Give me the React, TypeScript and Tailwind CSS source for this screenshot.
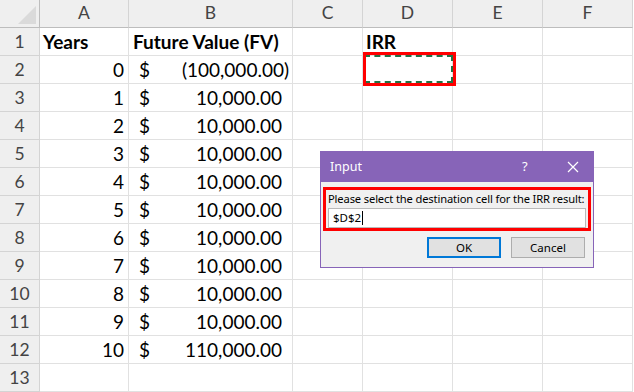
import React from "react";

const cols = ["A", "B", "C", "D", "E", "F"];
const colW = ["w-[89px]", "w-[164px]", "w-[70px]", "w-[90px]", "w-[90px]", "w-[90px]"];

const rows: { year: string; fv: string; neg?: boolean }[] = [
  { year: "0", fv: "(100,000.00)", neg: true },
  { year: "1", fv: "10,000.00" },
  { year: "2", fv: "10,000.00" },
  { year: "3", fv: "10,000.00" },
  { year: "4", fv: "10,000.00" },
  { year: "5", fv: "10,000.00" },
  { year: "6", fv: "10,000.00" },
  { year: "7", fv: "10,000.00" },
  { year: "8", fv: "10,000.00" },
  { year: "9", fv: "10,000.00" },
  { year: "10", fv: "110,000.00" },
];

const cell = "h-[28px] shrink-0 border-r border-b border-[#e1e1e1] flex items-end pb-[2px]";

function Row({ n, children }: { n: number; children: React.ReactNode[] }) {
  return (
    <div className="flex leading-[22px]">
      <div className="w-[40px] h-[28px] shrink-0 bg-[#efefef] border-r border-b border-[#d4d4d4] flex items-end justify-center pb-[2px] text-[#444] text-[17.5px]">
        {n}
      </div>
      {cols.map((c, i) => (
        <div key={c} className={`${cell} ${colW[i]}`}>
          {children[i]}
        </div>
      ))}
    </div>
  );
}

export default function App() {
  return (
    <div className="relative w-[634px] h-[392px] overflow-hidden bg-white text-[19px] text-black [font-family:Lato,'Liberation_Sans',sans-serif]">
      {/* column headers */}
      <div className="flex h-[28px] leading-[22px]">
        <div className="w-[40px] shrink-0 bg-[#efefef] border-r border-b border-[#bdbdbd] relative">
          <div className="absolute right-[3px] bottom-[3px] w-0 h-0 border-l-[18px] border-l-transparent border-b-[18px] border-b-[#dadada]" />
        </div>
        {cols.map((c, i) => (
          <div
            key={c}
            className={`${colW[i]} shrink-0 bg-[#efefef] border-r border-[#d4d4d4] border-b border-b-[#bdbdbd] flex items-end justify-center pb-[3px] text-[#444] text-[17.5px]`}
          >
            {c}
          </div>
        ))}
      </div>

      <Row n={1}>
        {[
          <span className="font-bold pl-[3px]">Years</span>,
          <span className="font-bold pl-[4px]">Future Value (FV)</span>,
          null,
          <span className="font-bold pl-[3px]">IRR</span>,
          null,
          null,
        ]}
      </Row>
      {rows.map((r, i) => (
        <Row key={i} n={i + 2}>
          {[
            <span className="w-full text-right pr-[4px]">{r.year}</span>,
            <div className="w-full flex justify-between pl-[10px]">
              <span>$</span>
              <span className={r.neg ? "pr-[3px]" : "pr-[10px]"}>{r.fv}</span>
            </div>,
            null,
            null,
            null,
            null,
          ]}
        </Row>
      ))}
      <Row n={13}>{[null, null, null, null, null, null]}</Row>

      {/* marching ants + highlight on D2 */}
      <div className="absolute left-[364px] top-[55px] w-[89px] h-[28px] border-2 border-dashed border-[#217346]" />
      <div className="absolute left-[363px] top-[52px] w-[93px] h-[34px] border-[3px] border-[#ff0000]" />

      {/* Input dialog */}
      <div className="absolute left-[320px] top-[151px] w-[274px] h-[117px] border border-[#8764b8] bg-[#f0f0f0] [font-family:'Noto_Sans','Open_Sans',sans-serif]">
        <div className="h-[30px] bg-[#8764b8] flex items-center text-white text-[12.5px] pl-[9px]">
          <span className="flex-1">Input</span>
          <span className="w-[10px] text-[13px] mr-[35px]">?</span>
          <svg width="12" height="12" viewBox="0 0 12 12" className="mr-[14px]">
            <path d="M1 1L11 11M11 1L1 11" stroke="white" strokeWidth="1.2" />
          </svg>
        </div>
        <div className="mx-[2px] mt-[5px] h-[44px] border-[3px] border-[#ff0000] px-[2px] pt-[2px]">
          <div className="text-[11.2px] leading-[14px] tracking-[-0.15px] whitespace-nowrap text-black">
            Please select the destination cell for the IRR result:
          </div>
          <div className="mt-[2px] h-[20px] bg-white border border-[#b9b9b9] flex items-center pl-[4px] text-[11.5px]">
            $D$2<span className="inline-block w-px h-[14px] bg-black ml-[1px]" />
          </div>
        </div>
        <div className="flex justify-end gap-[10px] mt-[6px] pr-[8px] text-[11.5px]">
          <div className="w-[74px] h-[21px] bg-[#e1e1e1] border-2 border-[#0078d7] flex items-center justify-center">
            OK
          </div>
          <div className="w-[74px] h-[21px] bg-[#e1e1e1] border border-[#adadad] flex items-center justify-center">
            Cancel
          </div>
        </div>
      </div>
    </div>
  );
}
